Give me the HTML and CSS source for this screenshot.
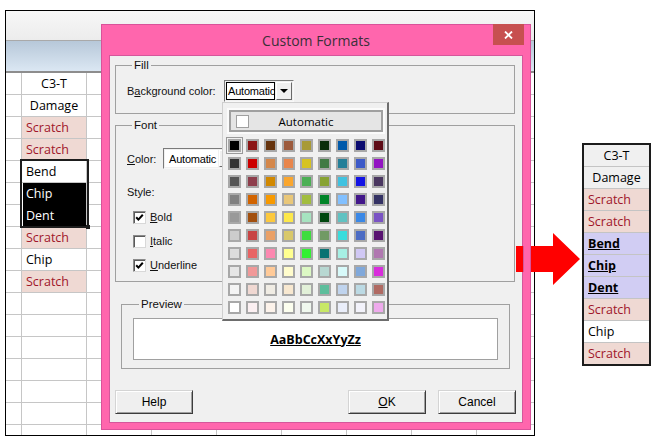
FILE: index.html
```html
<!DOCTYPE html>
<html lang="en">

<head>
    <meta charset="UTF-8">
    <title>Custom Formats</title>
    <link rel="stylesheet" href="styles.css">
</head>

<body>
    <div class="sheet">
        <div class="ribbon"></div>
        <div class="band"></div>
        <div class="cells">
            <div class="row"><div class="c0"></div><div class="c1 head">C3-T</div><div class="rest"></div></div>
            <div class="row"><div class="c0"></div><div class="c1 head">Damage</div><div class="rest"></div></div>
            <div class="row"><div class="c0"></div><div class="c1 bad">Scratch</div><div class="rest"></div></div>
            <div class="row"><div class="c0"></div><div class="c1 bad">Scratch</div><div class="rest"></div></div>
            <div class="row"><div class="c0"></div><div class="c1">Bend</div><div class="rest"></div></div>
            <div class="row"><div class="c0"></div><div class="c1 dark">Chip</div><div class="rest"></div></div>
            <div class="row"><div class="c0"></div><div class="c1 dark">Dent</div><div class="rest"></div></div>
            <div class="row"><div class="c0"></div><div class="c1 bad">Scratch</div><div class="rest"></div></div>
            <div class="row"><div class="c0"></div><div class="c1">Chip</div><div class="rest"></div></div>
            <div class="row"><div class="c0"></div><div class="c1 bad">Scratch</div><div class="rest"></div></div>
            <div class="row"><div class="c0"></div><div class="c1"></div><div class="rest"></div></div>
            <div class="row"><div class="c0"></div><div class="c1"></div><div class="rest"></div></div>
            <div class="row"><div class="c0"></div><div class="c1"></div><div class="rest"></div></div>
            <div class="row"><div class="c0"></div><div class="c1"></div><div class="rest"></div></div>
            <div class="row"><div class="c0"></div><div class="c1"></div><div class="rest"></div></div>
            <div class="row"><div class="c0"></div><div class="c1"></div><div class="rest"></div></div>
            <div class="row"><div class="c0"></div><div class="c1"></div><div class="rest"></div></div>
            <div class="pick"></div>
        </div>
    </div>

    <div class="dialog">
        <div class="titlebar">
            <span></span>
            <span class="title">Custom Formats</span>
            <span class="close">
                <svg width="9" height="8" viewBox="0 0 9 8"><path d="M1 0.5L8 7.5M8 0.5L1 7.5" stroke="#fff" stroke-width="1.8" fill="none"/></svg>
            </span>
        </div>
        <div class="client">
            <fieldset class="group fill">
                <legend>Fill</legend>
                <div class="field">
                    <label class="lbl-bg">B<u>a</u>ckground color:</label>
                    <div class="combo focus"><span class="value">Automatic</span><span class="drop"></span></div>
                </div>
            </fieldset>

            <fieldset class="group font">
                <legend>Font</legend>
                <div class="field">
                    <label class="lbl-color"><u>C</u>olor:</label>
                    <div class="combo wide"><span class="value">Automatic</span><span class="drop"></span></div>
                </div>
                <p class="style-lbl">Style:</p>
                <label class="check"><span class="box"><svg width="9" height="9" viewBox="0 0 9 9"><path d="M1.2 4.2L3.4 6.6L7.8 1.8" stroke="#000" stroke-width="2" fill="none"/></svg></span><span><u>B</u>old</span></label>
                <label class="check"><span class="box"></span><span><u>I</u>talic</span></label>
                <label class="check"><span class="box"><svg width="9" height="9" viewBox="0 0 9 9"><path d="M1.2 4.2L3.4 6.6L7.8 1.8" stroke="#000" stroke-width="2" fill="none"/></svg></span><span><u>U</u>nderline</span></label>
            </fieldset>

            <fieldset class="group preview">
                <legend>Preview</legend>
                <div class="sample">AaBbCcXxYyZz</div>
            </fieldset>

            <div class="buttons">
                <button>Help</button>
                <span class="spacer"></span>
                <button><u>O</u>K</button>
                <button>Cancel</button>
            </div>
        </div>

        <div class="palette">
            <div class="auto"><span class="auto-box"></span><span>Automatic</span><span></span></div>
            <div class="swatches">
                <i class="on" style="background:#000000"></i><i style="background:#8c1515"></i><i style="background:#66330d"></i><i style="background:#9c5a3c"></i><i style="background:#a89a36"></i><i style="background:#0b2d0b"></i><i style="background:#0059aa"></i><i style="background:#0b0b70"></i><i style="background:#5e0b16"></i>
                <i style="background:#333333"></i><i style="background:#cc0000"></i><i style="background:#d4874a"></i><i style="background:#e8864c"></i><i style="background:#d6c322"></i><i style="background:#417a44"></i><i style="background:#247f98"></i><i style="background:#3d5ac8"></i><i style="background:#9314c2"></i>
                <i style="background:#555555"></i><i style="background:#8e3e4c"></i><i style="background:#d18800"></i><i style="background:#faa62e"></i><i style="background:#4caf55"></i><i style="background:#87a232"></i><i style="background:#40c2e0"></i><i style="background:#1212e4"></i><i style="background:#4a3760"></i>
                <i style="background:#808080"></i><i style="background:#d26400"></i><i style="background:#f89a00"></i><i style="background:#e9c779"></i><i style="background:#a2bd3f"></i><i style="background:#008428"></i><i style="background:#82c0ff"></i><i style="background:#42178a"></i><i style="background:#343264"></i>
                <i style="background:#999999"></i><i style="background:#a24f0e"></i><i style="background:#fcc83c"></i><i style="background:#fde84a"></i><i style="background:#a6e3c0"></i><i style="background:#00470f"></i><i style="background:#60c2c2"></i><i style="background:#3a88e6"></i><i style="background:#7a53c4"></i>
                <i style="background:#cccccc"></i><i style="background:#c84444"></i><i style="background:#eaa066"></i><i style="background:#d9c86a"></i><i style="background:#40dc40"></i><i style="background:#719a64"></i><i style="background:#3adcdc"></i><i style="background:#4c6cc4"></i><i style="background:#581270"></i>
                <i style="background:#dddddd"></i><i style="background:#e86464"></i><i style="background:#fc88b0"></i><i style="background:#ffff90"></i><i style="background:#33f033"></i><i style="background:#097272"></i><i style="background:#a6f0e4"></i><i style="background:#d0c8f4"></i><i style="background:#b078b0"></i>
                <i style="background:#e6e6e6"></i><i style="background:#f09898"></i><i style="background:#ffca98"></i><i style="background:#fffccc"></i><i style="background:#dcf8c4"></i><i style="background:#b8d8d2"></i><i style="background:#d8fafa"></i><i style="background:#80a8da"></i><i style="background:#d82cdc"></i>
                <i style="background:#f4f4f4"></i><i style="background:#f0d8d2"></i><i style="background:#f0ece4"></i><i style="background:#f8e8d0"></i><i style="background:#e2f0d8"></i><i style="background:#5ebe9c"></i><i style="background:#c0d4ee"></i><i style="background:#bcdae4"></i><i style="background:#b06a62"></i>
                <i style="background:#ffffff"></i><i style="background:#fcf0f2"></i><i style="background:#fcf2ea"></i><i style="background:#fcfeee"></i><i style="background:#f0f8ee"></i><i style="background:#c8e866"></i><i style="background:#eaeefa"></i><i style="background:#f2f2fa"></i><i style="background:#eeaaec"></i>
            </div>
        </div>
    </div>

    <div class="result">
        <div class="r head">C3-T</div>
        <div class="r head">Damage</div>
        <div class="r bad">Scratch</div>
        <div class="r bad">Scratch</div>
        <div class="r hit">Bend</div>
        <div class="r hit">Chip</div>
        <div class="r hit">Dent</div>
        <div class="r bad">Scratch</div>
        <div class="r">Chip</div>
        <div class="r bad">Scratch</div>
    </div>

    <svg class="arrow" width="65" height="53" viewBox="0 0 65 53">
        <polygon points="0,13 37,13 37,0 64,26 37,52 37,39 0,39" fill="#ff0000"/>
        <rect x="7" y="13" width="8" height="26" fill="#ff66ad"/>
        <rect x="7" y="13" width="1" height="26" fill="#d4579b"/>
        <rect x="14" y="13" width="1" height="26" fill="#d9529a"/>
    </svg>
</body>

</html>
```

FILE: styles.css
```css
* {
    margin: 0;
    padding: 0;
    box-sizing: border-box;
}

body {
    position: relative;
    width: 655px;
    height: 440px;
    overflow: hidden;
    background: #fff;
    font-family: "Liberation Sans", Arial, sans-serif;
    font-size: 11px;
    color: #111;
}

/* spreadsheet window behind the dialog */
.sheet {
    position: absolute;
    left: 5px;
    top: 10px;
    width: 530px;
    height: 426px;
    border: 1px solid #000;
    background: #fff;
    overflow: hidden;
}

.ribbon {
    height: 30px;
    background: linear-gradient(#f7f7f7, #ececec);
    border-bottom: 1px solid #a9a9a9;
}

.band {
    height: 32px;
    background: linear-gradient(#b7c8d9, #dbe7f3);
    border-bottom: 2px solid #8d8d8d;
}

.cells {
    position: relative;
    font-family: "Open Sans", sans-serif;
    font-size: 12.5px;
}

.row {
    display: flex;
    height: 22px;
    border-bottom: 1px solid #c6c6c6;
}

.c0 {
    width: 16px;
    border-right: 1px solid #c6c6c6;
}

.c1 {
    width: 65px;
    border-right: 1px solid #c6c6c6;
    padding-left: 4px;
    line-height: 21px;
    white-space: nowrap;
    color: #000;
}

.rest {
    flex: 1;
    background: repeating-linear-gradient(to right, transparent 0 64px, #c6c6c6 64px 65px);
}

.head {
    text-align: center;
    padding-left: 0;
}

.bad {
    background: #efd9d3;
    color: #a0162a;
}

.dark {
    height: 22px;
    background: #000;
    color: #fff;
    box-shadow: inset 1px 0 #fff;
}

.pick {
    position: absolute;
    left: 14px;
    top: 86px;
    width: 69px;
    height: 69px;
    border: 2px solid #1d1d1d;
}

.pick::after {
    content: "";
    position: absolute;
    right: -3px;
    bottom: -3px;
    width: 4px;
    height: 4px;
    background: #1d1d1d;
}

/* dialog */
.dialog {
    position: absolute;
    left: 101px;
    top: 24px;
    width: 430px;
    height: 406px;
    background: #ff66ad;
    border: 1px solid #d9529a;
    padding: 0 7px 6px 7px;
    display: flex;
    flex-direction: column;
}

.titlebar {
    height: 30px;
    display: grid;
    grid-template-columns: 1fr auto 1fr;
    align-items: center;
}

.title {
    font-family: "Open Sans", sans-serif;
    font-size: 14px;
    color: #3a3038;
}

.close {
    justify-self: end;
    align-self: start;
    width: 31px;
    height: 21px;
    margin-top: -1px;
    margin-right: -1px;
    background: #c75050;
    display: flex;
    align-items: center;
    justify-content: center;
}

.client {
    flex: 1;
    background: #f0f0f0;
    border: 1px solid #d4579b;
    padding: 2px 7px 0 5px;
    display: flex;
    flex-direction: column;
}

.group {
    border: 1px solid #a0a0a0;
    min-width: 0;
}

.group legend {
    margin-left: 5px;
    padding: 0 2px;
    line-height: 14px;
    font-size: 11.5px;
}

.fill {
    padding: 8px 0 11px 11px;
}

.field {
    display: flex;
    align-items: center;
}

.lbl-bg {
    width: 97px;
}

.lbl-color {
    width: 36px;
}

.combo {
    display: flex;
    gap: 1px;
    width: 70px;
    height: 22px;
    padding: 1px;
    background: #f0f0f0;
    border: 1px solid;
    border-color: #7a7a7a #f8f8f8 #f8f8f8 #7a7a7a;
}

.combo .value {
    flex: 1;
    overflow: hidden;
    white-space: nowrap;
    background: #fff;
    border: 1px solid #fff;
    padding-left: 1px;
    line-height: 16px;
    font-size: 11px;
    letter-spacing: -0.2px;
    color: #000;
}

.combo.focus .value {
    border-color: #000;
}

.combo .drop {
    width: 16px;
    background: #f0f0f0;
    border: 1px solid;
    border-color: #fff #6a6a6a #6a6a6a #fff;
    display: flex;
    align-items: center;
    justify-content: center;
}

.combo .drop::before {
    content: "";
    border-left: 4px solid transparent;
    border-right: 4px solid transparent;
    border-top: 4px solid #000;
}

.combo.wide {
    width: 74px;
    height: 21px;
}

.combo.wide .value {
    padding-left: 3px;
}

.font {
    margin-top: 4px;
    padding: 16px 0 4px 11px;
}

.style-lbl {
    margin-top: 16px;
    line-height: 14px;
}

.check {
    display: flex;
    align-items: center;
    gap: 4px;
    height: 24px;
    margin-left: 6px;
}

.check:first-of-type {
    margin-top: 6px;
}

.box {
    width: 13px;
    height: 13px;
    background: #fff;
    border: 1px solid;
    border-color: #8a8a8a #d8d8d8 #d8d8d8 #8a8a8a;
    box-shadow: inset 1px 1px #5a5a5a;
    display: flex;
    align-items: center;
    justify-content: center;
}

.preview {
    margin: 15px 5px 0 6px;
    padding: 7px 11px 8px 11px;
}

.preview legend {
    margin-left: 6px;
}

.sample {
    height: 42px;
    background: #fff;
    border: 1px solid #a0a0a0;
    display: flex;
    align-items: center;
    justify-content: center;
    font-family: "Open Sans", sans-serif;
    font-weight: bold;
    font-size: 12.5px;
    text-decoration: underline;
    color: #000;
}

.buttons {
    display: flex;
    gap: 12px;
    margin-top: 21px;
    margin-right: -1px;
}

.spacer {
    flex: 1;
}

button {
    width: 78px;
    height: 24px;
    background: #efefef;
    border: 1px solid;
    border-color: #d4d4d4 #3c3c3c #3c3c3c #d4d4d4;
    box-shadow: inset 1px 1px #fff, inset -1px -1px #a0a0a0;
    font-family: "Liberation Sans", Arial, sans-serif;
    font-size: 12px;
    color: #000;
}

/* colour drop-down */
.palette {
    position: absolute;
    left: 120px;
    top: 77px;
    width: 167px;
    height: 219px;
    background: #f0f0f0;
    border: 1px solid #cfcfcf;
    border-right: 2px solid #6d6d6d;
    border-bottom: 2px solid #6d6d6d;
    padding: 7px 0 0 5px;
}

.auto {
    display: grid;
    grid-template-columns: 1fr auto 1fr;
    align-items: center;
    width: 154px;
    height: 22px;
    margin-left: 1px;
    background: #e5e5e5;
    border: 2px solid #a0a0a0;
    box-shadow: 0 0 0 2px #fbfbfb;
    font-family: "Open Sans", sans-serif;
    font-size: 11.5px;
    color: #000;
}

.auto-box {
    width: 13px;
    height: 13px;
    margin-left: 5px;
    background: #fff;
    border: 1px solid #a0a0a0;
}

.swatches {
    display: grid;
    grid-template-columns: repeat(9, 13px);
    grid-auto-rows: 13px;
    gap: 5px;
    margin-top: 7px;
}

.swatches i {
    border: 2px solid #a8a8a8;
}

.swatches i.on {
    outline: 1px solid #9a9a9a;
    outline-offset: 1px;
}

/* formatted result */
.result {
    position: absolute;
    left: 582px;
    top: 143px;
    width: 69px;
    border: 2px solid #1c1c1c;
    font-family: "Open Sans", sans-serif;
    font-size: 12.5px;
}

.r {
    height: 22px;
    line-height: 21px;
    padding-left: 4px;
    border-bottom: 1px solid #c4c4c4;
    color: #000;
    background: #fff;
}

.r:last-child {
    height: 21px;
    border-bottom: none;
}

.r.head {
    background: #f0f0f0;
    text-align: center;
    padding-left: 0;
}

.r.bad {
    background: #efd9d3;
    color: #a0162a;
}

.r.hit {
    background: #d1cdf3;
    font-weight: bold;
    text-decoration: underline;
}

.arrow {
    position: absolute;
    left: 516px;
    top: 233px;
}
```
